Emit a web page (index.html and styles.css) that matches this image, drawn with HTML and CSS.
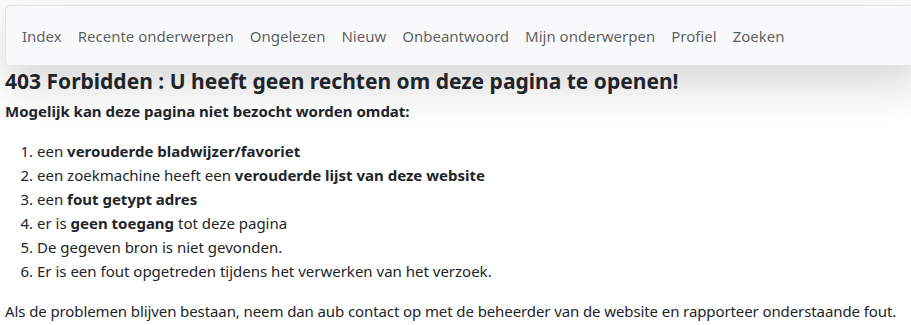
FILE: index.html
```html
<!DOCTYPE html>
<html lang="nl">
<head>
    <meta charset="UTF-8">
    <meta name="viewport" content="width=device-width, initial-scale=1.0">
    <title>403 Forbidden</title>
    <link rel="stylesheet" href="styles.css">
</head>
<body>
    <nav class="navbar">
        <ul class="nav">
            <li><a href="#">Index</a></li>
            <li><a href="#">Recente onderwerpen</a></li>
            <li><a href="#">Ongelezen</a></li>
            <li><a href="#">Nieuw</a></li>
            <li><a href="#">Onbeantwoord</a></li>
            <li><a href="#">Mijn onderwerpen</a></li>
            <li><a href="#">Profiel</a></li>
            <li><a href="#">Zoeken</a></li>
        </ul>
    </nav>

    <main class="content">
        <h4>403 Forbidden : U heeft geen rechten om deze pagina te openen!</h4>
        <p class="lead"><b>Mogelijk kan deze pagina niet bezocht worden omdat:</b></p>
        <ol>
            <li>een <b>verouderde bladwijzer/favoriet</b></li>
            <li>een zoekmachine heeft een <b>verouderde lijst van deze website</b></li>
            <li>een <b>fout getypt adres</b></li>
            <li>er is <b>geen toegang</b> tot deze pagina</li>
            <li>De gegeven bron is niet gevonden.</li>
            <li>Er is een fout opgetreden tijdens het verwerken van het verzoek.</li>
        </ol>
        <p class="note">Als de problemen blijven bestaan, neem dan aub contact op met de beheerder van de website en rapporteer onderstaande fout.</p>
    </main>
</body>
</html>
```

FILE: styles.css
```css
* {
    margin: 0;
    padding: 0;
    box-sizing: border-box;
}

body {
    font-family: "Noto Sans", "Open Sans", sans-serif;
    font-size: 15px;
    line-height: 24px;
    color: #212529;
    background: #fff;
    padding: 5px;
    overflow: hidden;
}

.navbar {
    width: 920px;
    height: 61px;
    background-color: #f8f9fa;
    border: 1px solid #e3e4e6;
    border-radius: 5px;
    box-shadow: 0 16px 48px rgba(0, 0, 0, 0.175);
    display: flex;
    align-items: center;
    padding: 0 8px;
}

.nav {
    list-style: none;
    display: flex;
}

.nav a {
    display: block;
    padding: 8px;
    color: rgba(0, 0, 0, 0.65);
    text-decoration: none;
}

.content {
    position: relative;
}

h4 {
    font-size: 21px;
    font-weight: 700;
    line-height: 1.2;
    margin: 3px 0 5px;
}

.lead {
    margin-bottom: 16px;
}

ol {
    padding-left: 32px;
    margin-bottom: 16px;
}

p {
    margin-bottom: 16px;
}

.note {
    letter-spacing: -0.1px;
    white-space: nowrap;
}
```
